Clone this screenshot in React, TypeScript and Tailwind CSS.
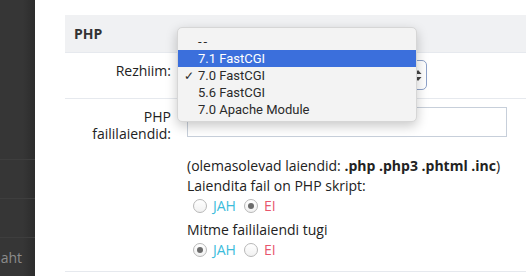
import React from "react";

const Radio = ({ checked }: { checked?: boolean }) => (
  <span className="ml-[6px] mr-[6px] inline-flex h-[14px] w-[14px] shrink-0 items-center justify-center rounded-full border border-[#b8b8b8] bg-[linear-gradient(#ffffff,#f1f1f1)]">
    {checked && <span className="h-[6px] w-[6px] rounded-full bg-[#6b6b6b]" />}
  </span>
);

const YesNo = ({ yes }: { yes: boolean }) => (
  <div className="flex h-[19px] items-center">
    <Radio checked={yes} />
    <span className="text-[#3bbcdb]">JAH</span>
    <span className="ml-[2px] flex items-center">
      <Radio checked={!yes} />
    </span>
    <span className="text-[#e8566d]">EI</span>
  </div>
);

const menuItems = [
  { label: "--", wide: true },
  { label: "7.1 FastCGI", active: true },
  { label: "7.0 FastCGI", checked: true },
  { label: "5.6 FastCGI" },
  { label: "7.0 Apache Module" },
];

const App = () => {
  return (
    <div className="flex h-[276px] w-[526px] overflow-hidden bg-white font-['Open_Sans',sans-serif] text-[14px] text-[#222]">
      {/* sidebar */}
      <div className="flex w-[35px] shrink-0 flex-col bg-[linear-gradient(to_right,#363636_65%,#2c2c2c)]">
        <div className="h-[163px]" />
        <div className="h-[40px] border-t border-[#3e3e3e]" />
        <div className="h-[40px] border-t border-[#3e3e3e]" />
        <div className="flex h-[40px] items-center justify-end overflow-hidden border-t border-[#3e3e3e] pr-[13px] text-[#8c8c8c]">
          <span className="whitespace-nowrap">Kettamaht</span>
        </div>
      </div>

      {/* content */}
      <div className="relative flex-1 pl-[30px] pt-[15px]">
        <div className="flex h-[37px] items-center bg-[#f0f1f3] pl-[9px] font-bold text-[#333]">
          PHP
        </div>

        {/* Rezhiim */}
        <div className="flex h-[47px] border-t border-b border-[#e6e9ee] pt-[7px]">
          <div className="w-[106px] pt-[1px] text-right leading-[20px]">Rezhiim:</div>
          <div className="ml-[16px]">
            <div className="relative h-[30px] w-[240px] rounded-[5px] border border-[#8ea2c9] bg-white">
              <svg className="absolute right-[4px] top-[8px]" width="8" height="13" viewBox="0 0 8 13">
                <path d="M4 1 L7.5 5 L0.5 5 Z" fill="#444" />
                <path d="M4 12 L7.5 8 L0.5 8 Z" fill="#444" />
              </svg>
            </div>
          </div>
        </div>

        {/* extensions */}
        <div className="flex h-[173px] border-b border-[#e6e9ee] pt-[8px]">
          <div className="w-[106px] pt-[1px] text-right leading-[17px]">
            PHP
            <br />
            faililaiendid:
          </div>
          <div className="ml-[16px] flex flex-col">
            <div className="h-[30px] w-[320px] border border-[#c7cfda] bg-white" />
            <div className="mt-[19px] leading-[20px]">
              <div>
                (olemasolevad laiendid: <b>.php .php3 .phtml .inc</b>)
              </div>
              <div>Laiendita fail on PHP skript:</div>
              <YesNo yes={false} />
              <div className="mt-[5px]">Mitme faililaiendi tugi</div>
              <YesNo yes={true} />
            </div>
          </div>
        </div>

        {/* open select menu */}
        <div className="absolute left-[142px] top-[27px] w-[240px] rounded-[5px] border border-[#d6d6d6] bg-[#f3f3f3] pb-[3px] pt-[5px] font-['Roboto',sans-serif] text-[13px] text-[#2a2a2a] shadow-[0_4px_12px_rgba(0,0,0,0.22)]">
          {menuItems.map((item) => (
            <div
              key={item.label}
              className={
                item.active
                  ? "flex h-[17px] items-center bg-[#3b6fdc] text-white"
                  : "flex h-[17px] items-center"
              }
            >
              <span className="w-[20px] pl-[6px] text-[12px]">{item.checked ? "✓" : ""}</span>
              <span className={item.wide ? "tracking-[2px]" : ""}>{item.label}</span>
            </div>
          ))}
        </div>
      </div>
    </div>
  );
};

export default App;
